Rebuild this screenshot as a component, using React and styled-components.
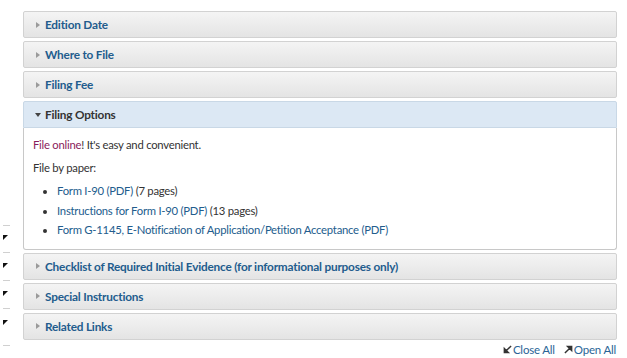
import React from 'react'
import styled, { createGlobalStyle } from 'styled-components'

const GlobalStyle = createGlobalStyle`
  html, body {
    margin: 0;
    padding: 0;
    background: #ffffff;
    overflow: hidden;
  }
  body {
    font-family: Lato, "Open Sans", sans-serif;
    color: #333333;
  }
`

const Page = styled.div`
  position: relative;
  width: 627px;
  height: 358px;
  overflow: hidden;
`

const Content = styled.div`
  width: 594px;
  margin: -9px 0 0 23px;
  display: flex;
  flex-direction: column;
`

const ToggleBar = styled.div`
  display: flex;
  justify-content: flex-end;
  gap: 9px;
  height: 20px;
  align-items: ${p => (p.$top ? 'flex-start' : 'center')};
  margin-top: ${p => (p.$top ? '-5px' : '0')};
  margin-bottom: ${p => (p.$top ? '5px' : '0')};
  font-size: 11.5px;
  letter-spacing: -0.2px;
  padding-right: 1px;
`

const ToggleLink = styled.span`
  display: flex;
  align-items: center;
  gap: 1px;
  color: #2a6496;
  svg {
    width: 9px;
    height: 9px;
  }
`

const Accordion = styled.div`
  display: flex;
  flex-direction: column;
  gap: 3px;
`

const Panel = styled.div`
  display: flex;
  flex-direction: column;
`

const Header = styled.div`
  height: 25px;
  display: flex;
  align-items: center;
  padding-left: 11px;
  border: 1px solid ${p => (p.$open ? '#c9d8e6' : '#d2d2d2')};
  border-radius: 2px 2px ${p => (p.$open ? '0 0' : '2px 2px')};
  background: ${p =>
    p.$open ? '#dce8f4' : 'linear-gradient(#f4f4f4, #e4e4e4)'};
  font-weight: 700;
  font-size: 11.8px;
  letter-spacing: -0.2px;
  color: ${p => (p.$open ? '#333333' : '#225c8d')};
`

const Caret = styled.span`
  width: 0;
  height: 0;
  ${p =>
    p.$open
      ? `border-left: 3.5px solid transparent;
         border-right: 3.5px solid transparent;
         border-top: 4px solid #444;
         margin-right: 4px;`
      : `border-top: 3.5px solid transparent;
         border-bottom: 3.5px solid transparent;
         border-left: 4px solid #9a9a9a;
         margin-left: 1px;
         margin-right: 5px;`}
`

const Body = styled.div`
  border: 1px solid #c8c8c8;
  border-top: none;
  border-radius: 0 0 3px 3px;
  padding: 9px 9px 9px;
  font-size: 11.3px;
  letter-spacing: -0.25px;
  background: #fff;
`

const Para = styled.p`
  margin: 0 0 ${p => (p.$tight ? '6px' : '8px')};
  line-height: 15px;
`

const Link = styled.a`
  color: ${p => (p.$accent ? '#8a1c5c' : '#225c8d')};
  text-decoration: none;
`

const List = styled.ul`
  margin: 0;
  padding-left: 24px;
  list-style: disc;
  li {
    line-height: 19.5px;
  }
  li::marker {
    font-size: 11px;
  }
`

const Gutter = styled.div`
  position: absolute;
  left: 0;
  top: 0;
`

const Dash = styled.span`
  position: absolute;
  left: 3px;
  width: 7px;
  height: 1px;
  background: #d0d0d0;
`

const Pin = styled.span`
  position: absolute;
  left: 3px;
  width: 0;
  height: 0;
  border-top: 5px solid #111;
  border-right: 5px solid transparent;
`

const ArrowIcon = ({ dir }) => (
  <svg viewBox="0 0 10 10">
    {dir === 'in' ? (
      <path d="M9 1 L3 7 M1.5 4 L1.5 8.5 L6 8.5 Z" stroke="#333" strokeWidth="1.6" fill="#333" />
    ) : (
      <path d="M1 9 L7 3 M4 1.5 L8.5 1.5 L8.5 6 Z" stroke="#333" strokeWidth="1.6" fill="#333" />
    )}
  </svg>
)

const Toggles = ({ top }) => (
  <ToggleBar $top={top}>
    <ToggleLink><ArrowIcon dir="in" />Close All</ToggleLink>
    <ToggleLink><ArrowIcon dir="out" />Open All</ToggleLink>
  </ToggleBar>
)

const closedTop = ['Edition Date', 'Where to File', 'Filing Fee']
const closedBottom = [
  'Checklist of Required Initial Evidence (for informational purposes only)',
  'Special Instructions',
  'Related Links',
]

const ClosedPanel = ({ title }) => (
  <Panel>
    <Header>
      <Caret />
      {title}
    </Header>
  </Panel>
)

const App = () => {
  return (
    <Page>
      <GlobalStyle />
      <Gutter>
        {[225, 252, 280, 308, 345].map(y => (
          <Dash key={y} style={{ top: y }} />
        ))}
        {[235, 263, 291, 320].map(y => (
          <Pin key={y} style={{ top: y }} />
        ))}
      </Gutter>
      <Content>
        <Toggles top />
        <Accordion>
          {closedTop.map(t => (
            <ClosedPanel key={t} title={t} />
          ))}
          <Panel>
            <Header $open>
              <Caret $open />
              Filing Options
            </Header>
            <Body>
              <Para>
                <Link $accent>File online</Link>! It's easy and convenient.
              </Para>
              <Para $tight>File by paper:</Para>
              <List>
                <li><Link>Form I-90 (PDF)</Link> (7 pages)</li>
                <li><Link>Instructions for Form I-90 (PDF)</Link> (13 pages)</li>
                <li><Link>Form G-1145, E-Notification of Application/Petition Acceptance (PDF)</Link></li>
              </List>
            </Body>
          </Panel>
          {closedBottom.map(t => (
            <ClosedPanel key={t} title={t} />
          ))}
        </Accordion>
        <Toggles />
      </Content>
    </Page>
  )
}

export default App
